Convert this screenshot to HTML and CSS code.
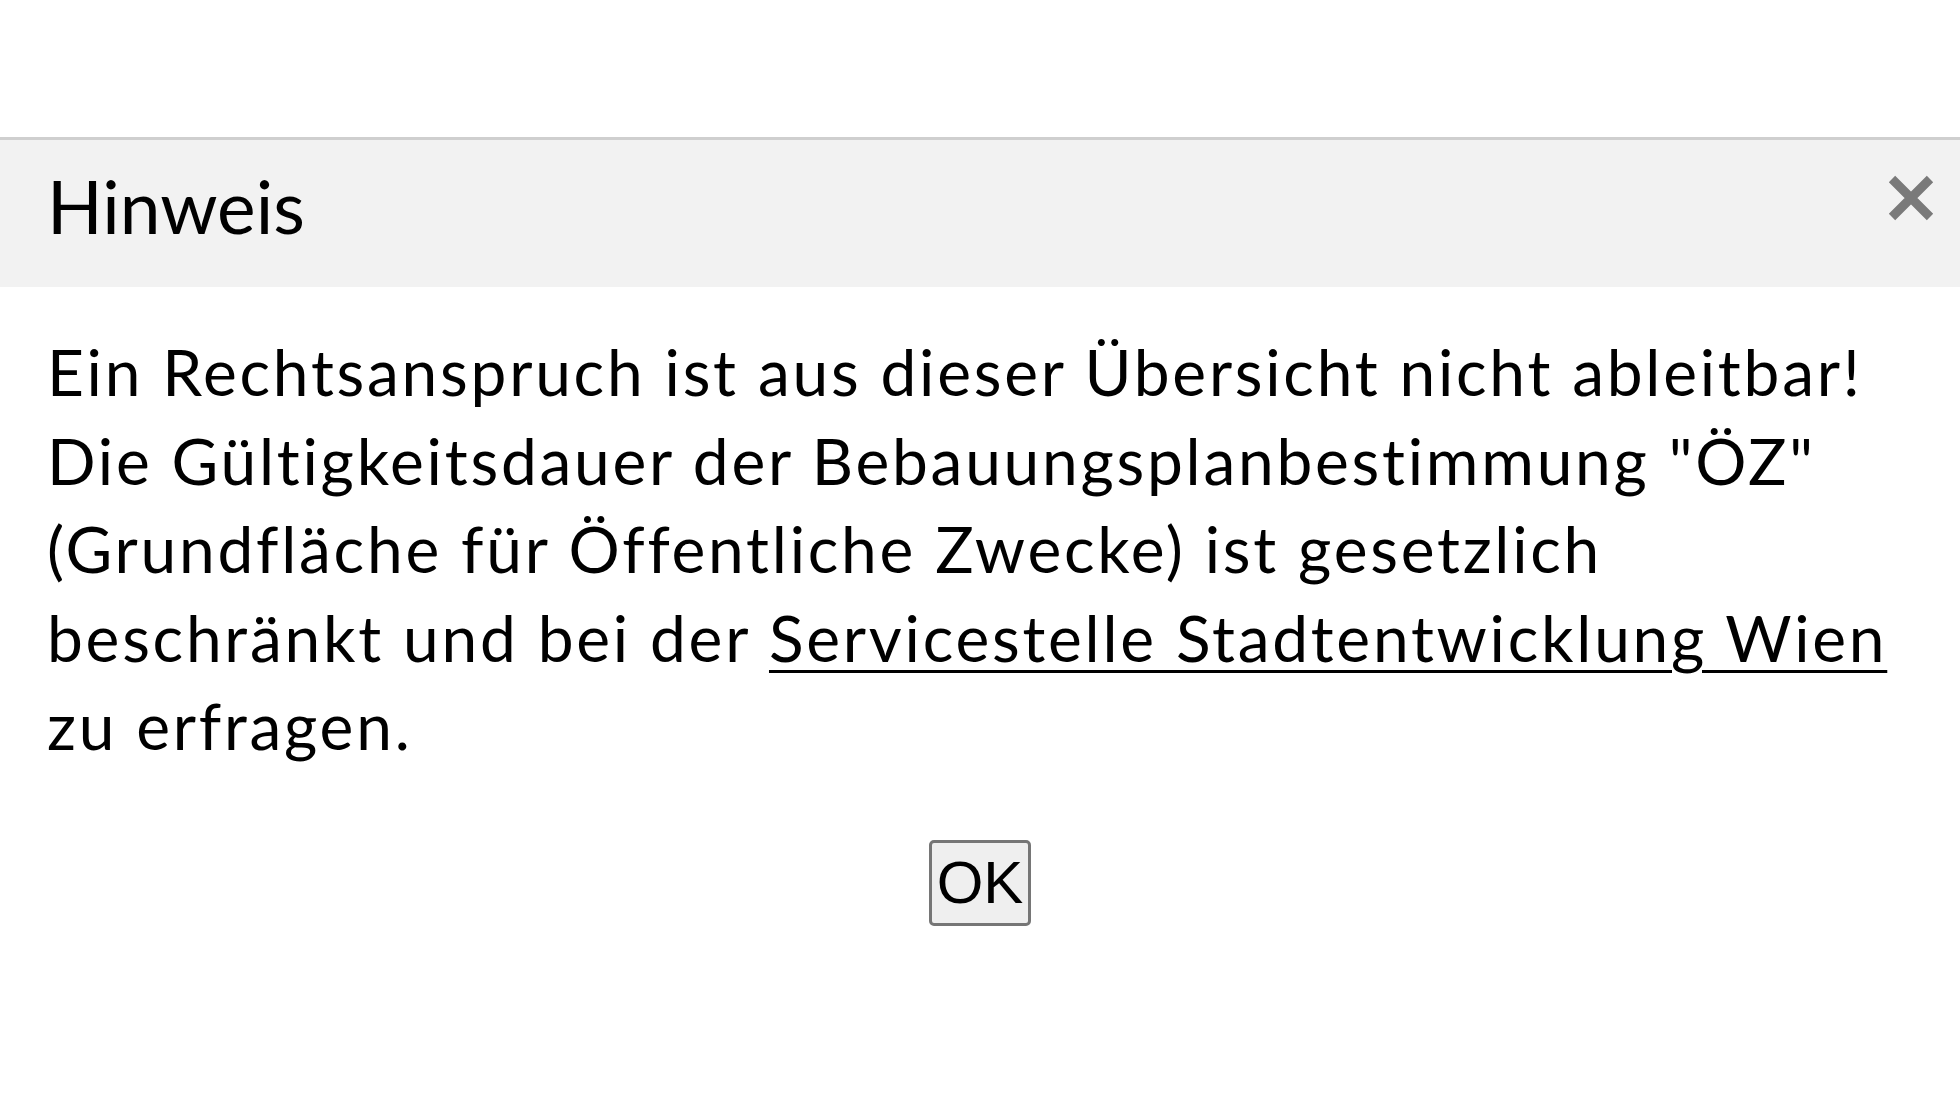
FILE: index.html
```html
<!DOCTYPE html>
<html lang="de">
<head>
<meta charset="utf-8">
<title>Hinweis</title>
<link rel="stylesheet" href="styles.css">
</head>
<body>
<div class="top-space"></div>
<div class="dialog">
  <div class="dialog-header">
    <span class="dialog-title">Hinweis</span>
    <button class="close-btn" aria-label="Schließen">
      <svg viewBox="0 0 50 50" width="50" height="50"><path d="M6 6 L44 44 M44 6 L6 44" stroke="#7a7a7a" stroke-width="9" stroke-linecap="butt" fill="none"/></svg>
    </button>
  </div>
  <div class="dialog-body">
    <p class="message">Ein Rechtsanspruch ist aus dieser Übersicht nicht ableitbar!<br>Die Gültigkeitsdauer der Bebauungsplanbestimmung "ÖZ"<br>(Grundfläche für Öffentliche Zwecke) ist gesetzlich<br>beschränkt und bei der <a class="link" href="#">Servicestelle Stadtentwicklung Wien</a><br>zu erfragen.</p>
    <div class="actions">
      <button class="ok-btn">OK</button>
    </div>
  </div>
</div>
</body>
</html>
```

FILE: styles.css
```css
html, body {
  margin: 0;
  padding: 0;
  background: #ffffff;
}
body {
  font-family: "Lato", "Liberation Sans", sans-serif;
  color: #000;
  font-variant-ligatures: none;
}
.top-space {
  height: 137px;
}
.dialog {
  border-top: 3px solid #cfcfcf;
}
.dialog-header {
  position: relative;
  background: #f2f2f2;
  height: 147px;
  box-sizing: border-box;
  padding: 22px 47px 0 47px;
}
.dialog-title {
  font-size: 73px;
  line-height: 88px;
  display: block;
}
.close-btn {
  position: absolute;
  right: 24px;
  top: 33px;
  width: 50px;
  height: 50px;
  padding: 0;
  border: 0;
  background: transparent;
}
.close-btn svg {
  display: block;
}
.dialog-body {
  padding: 41px 47px 0 47px;
}
.message {
  margin: 0;
  font-size: 64px;
  line-height: 88.5px;
  letter-spacing: 2.75px;
}
.link {
  color: #000;
  text-decoration: underline;
  text-decoration-thickness: 3px;
  text-underline-offset: 8px;
}
.actions {
  display: flex;
  justify-content: center;
  padding-top: 69px;
}
.ok-btn {
  font-family: "Liberation Sans", sans-serif;
  font-size: 60px;
  color: #000;
  width: 102px;
  height: 86px;
  padding: 0;
  background: #efefef;
  border: 3px solid #767676;
  border-radius: 5px;
}
```
